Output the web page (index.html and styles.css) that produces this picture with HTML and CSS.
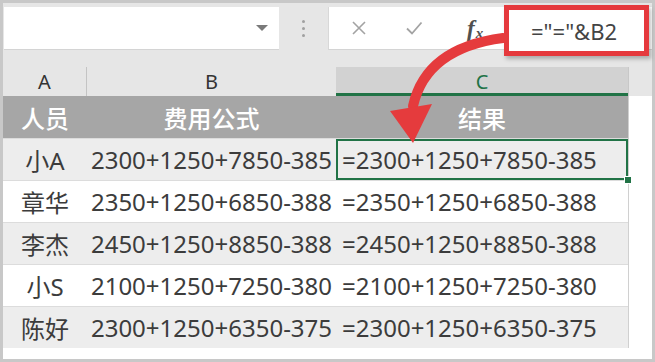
FILE: index.html
```html
<!DOCTYPE html>
<html lang="zh-CN">
<head>
  <meta charset="UTF-8" />
  <title>公式结果</title>
  <link rel="stylesheet" href="styles.css">
</head>
<body>

  <div class="sheet">
    <div class="bar">
      <div class="namebox"><span class="caret"></span></div>
      <div class="grip"><i></i><i></i><i></i></div>
      <div class="fbar">
        <svg class="icon cancel" width="16" height="16" viewBox="0 0 16 16">
          <path d="M2 2 L14 14 M14 2 L2 14" stroke="#a3a3a3" stroke-width="1.6" fill="none"/>
        </svg>
        <svg class="icon enter" width="18" height="16" viewBox="0 0 18 16">
          <path d="M2 8.5 L7 13.5 L16.5 2.5" stroke="#a3a3a3" stroke-width="1.8" fill="none"/>
        </svg>
        <span class="fx"><i>f</i><em>x</em></span>
        <div class="formula">="="&amp;B2</div>
      </div>
    </div>

    <div class="row colheads">
      <div class="a">A</div>
      <div class="b">B</div>
      <div class="c current">C</div>
      <div class="rest"></div>
    </div>

    <div class="row head">
      <div class="a">人员</div>
      <div class="b">费用公式</div>
      <div class="c">结果</div>
      <div class="rest"></div>
    </div>

    <div class="row data band">
      <div class="a">小A</div>
      <div class="b">2300+1250+7850-385</div>
      <div class="c left active">=2300+1250+7850-385<span class="handle"></span></div>
      <div class="rest"></div>
    </div>
    <div class="row data">
      <div class="a">章华</div>
      <div class="b">2350+1250+6850-388</div>
      <div class="c left">=2350+1250+6850-388</div>
      <div class="rest"></div>
    </div>
    <div class="row data band">
      <div class="a">李杰</div>
      <div class="b">2450+1250+8850-388</div>
      <div class="c left">=2450+1250+8850-388</div>
      <div class="rest"></div>
    </div>
    <div class="row data">
      <div class="a">小S</div>
      <div class="b">2100+1250+7250-380</div>
      <div class="c left">=2100+1250+7250-380</div>
      <div class="rest"></div>
    </div>
    <div class="row data band">
      <div class="a">陈好</div>
      <div class="b">2300+1250+6350-375</div>
      <div class="c left">=2300+1250+6350-375</div>
      <div class="rest"></div>
    </div>

    <!-- annotation arrow from the formula box down to C2 -->
    <svg class="arrow" width="655" height="362" viewBox="0 0 655 362">
      <path d="M503 38 Q426 48 413 106" stroke="#e53b3d" stroke-width="10" stroke-linecap="round" fill="none"/>
      <polygon points="390,111 432,104 413,143" fill="#e53b3d"/>
    </svg>
  </div>

</body>
</html>
```

FILE: styles.css
```css
* { box-sizing: border-box; }
body {
  margin: 0;
  font-family: 'Noto Sans', 'Noto Sans CJK SC', sans-serif;
  color: #3c3c3c;
}
.sheet {
  position: relative;
  width: 655px;
  height: 362px;
  border: 3px solid #c8c8c8;
  background: #fff;
}

/* formula bar */
.bar {
  height: 64px;
  background: #e6e6e6;
  display: flex;
  padding-top: 4px;
  align-items: flex-start;
}
.namebox {
  margin-left: 1px;
  width: 275px;
  height: 43px;
  background: #fff;
  border-bottom: 1px solid #d4d4d4;
  display: flex;
  align-items: center;
  justify-content: flex-end;
  padding-right: 11px;
}
.caret {
  width: 0;
  height: 0;
  border-left: 6px solid transparent;
  border-right: 6px solid transparent;
  border-top: 6px solid #7a7a7a;
}
.grip {
  width: 49px;
  height: 43px;
  display: flex;
  flex-direction: column;
  align-items: center;
  justify-content: center;
  gap: 4px;
}
.grip i {
  width: 3px;
  height: 3px;
  border-radius: 50%;
  background: #a0a0a0;
}
.fbar {
  position: relative;
  flex: 1;
  height: 43px;
  background: #fff;
  border-left: 1px solid #d8d8d8;
  border-bottom: 1px solid #d4d4d4;
  display: flex;
  align-items: center;
}
.cancel { margin-left: 22px; }
.enter { margin-left: 38px; }
.fx {
  margin-left: 44px;
  font-family: 'Liberation Serif', serif;
  font-weight: bold;
  color: #505050;
  font-size: 23px;
  line-height: 1;
}
.fx em {
  font-size: 15px;
  position: relative;
  top: 2px;
  margin-left: 1px;
}
.formula {
  position: absolute;
  left: 175px;
  top: -2px;
  width: 145px;
  height: 51px;
  border: 5px solid #e5393d;
  background: #fff;
  box-shadow: 2px 3px 4px rgba(0, 0, 0, 0.25);
  font-size: 22px;
  color: #444;
  display: flex;
  align-items: center;
  padding-left: 22px;
}

/* grid */
.row {
  display: flex;
  height: 42px;
  font-size: 24px;
}
.row > div {
  display: flex;
  align-items: center;
  justify-content: center;
  white-space: nowrap;
}
.a { width: 84px; }
.b { width: 249px; }
.c { width: 292px; }
.rest {
  flex: 1;
  border-left: 1px solid #d0d0d0;
}

.colheads {
  height: 29px;
  font-size: 20px;
  background: #e6e6e6;
  color: #333;
}
.colheads .a { border-right: 1px solid #c4c4c4; }
.colheads .current {
  background: #d2d2d2;
  color: #217346;
  border-bottom: 3px solid #217346;
  padding-top: 3px;
}
.colheads .rest { border-left: 1px solid #c8c8c8; }

.head > .a, .head > .b, .head > .c {
  background: #a6a6a6;
  color: #fff;
  font-weight: 500;
}

.data > .a, .data > .b, .data > .c {
  border-top: 1px solid #dcdcdc;
}
.band > .a, .band > .b, .band > .c { background: #ededed; }

.row > .left { justify-content: flex-start; padding-left: 6px; }

.active {
  position: relative;
  box-shadow: inset 0 0 0 2px #217346;
}
.handle {
  position: absolute;
  right: -4px;
  bottom: -4px;
  width: 8px;
  height: 8px;
  background: #217346;
  border: 1px solid #fff;
}

.arrow {
  position: absolute;
  left: -3px;
  top: -3px;
  pointer-events: none;
}
```
